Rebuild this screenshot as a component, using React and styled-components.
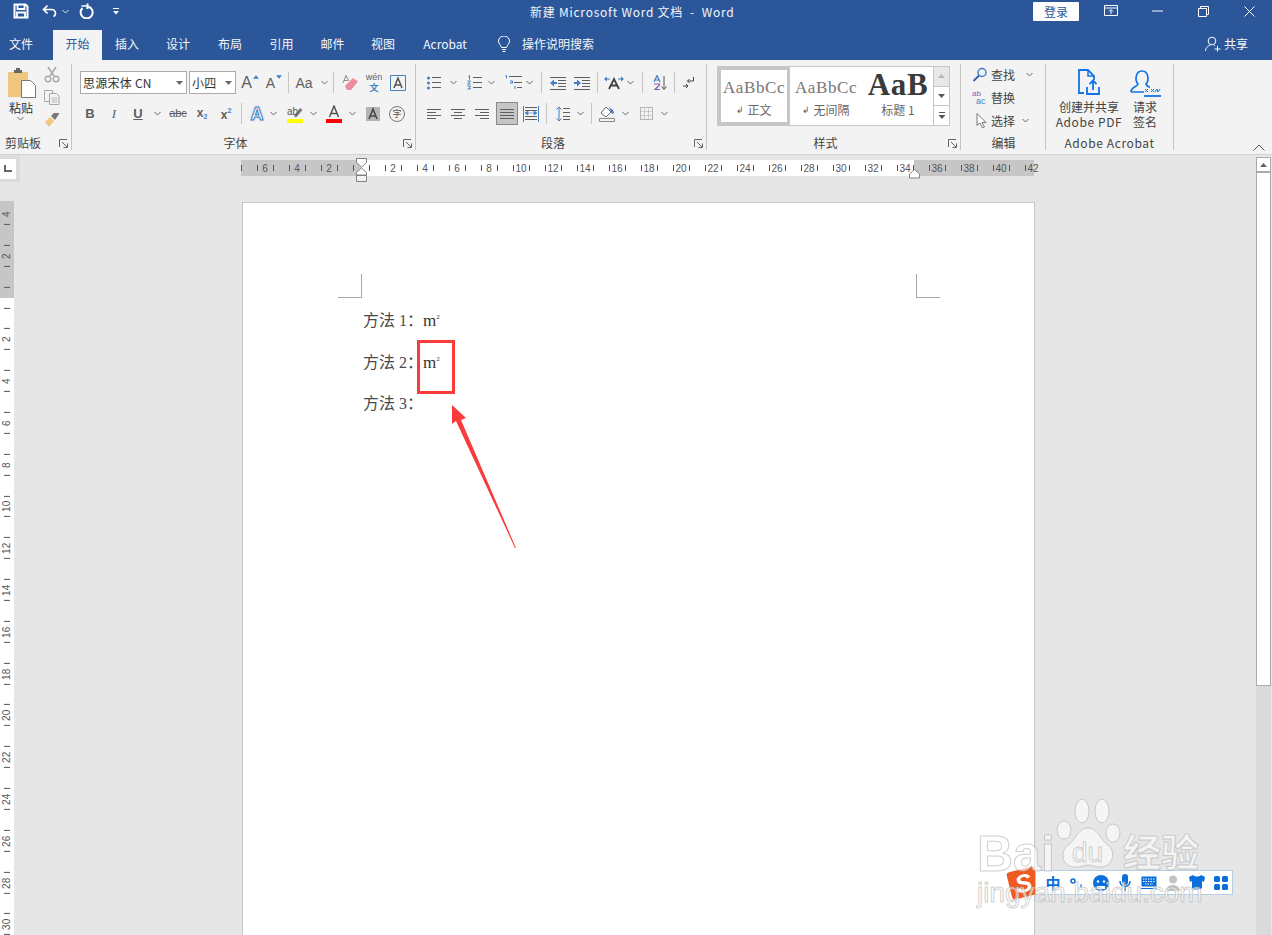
import styled, { createGlobalStyle } from "styled-components";

const FONT = `"Noto Sans CJK SC", "Noto Sans", sans-serif`;
const BLUE = "#2b579a";
const ICON_GREY = "#5f5f5f";
const ICON_BLUE = "#3f7fc4";

const GlobalStyle = createGlobalStyle`
  html, body { margin: 0; padding: 0; background: #e6e6e6; }
  * { box-sizing: border-box; }
`;

const Root = styled.div`
  position: relative;
  display: flex;
  flex-direction: column;
  width: 1272px;
  height: 935px;
  overflow: hidden;
  font-family: ${FONT};
  font-size: 12px;
  color: #333;
`;

/* title bar */
const TitleBar = styled.div`
  display: flex;
  align-items: center;
  flex: 0 0 30px;
  padding-bottom: 8px;
  background: ${BLUE};
  color: #fff;
`;
const QuickAccess = styled.div`
  display: flex;
  align-items: center;
  flex: 0 0 530px;
  padding-left: 13px;
`;
const QatButton = styled.span`
  display: flex;
  align-items: center;
  justify-content: center;
  width: ${(p) => p.$w}px;
  margin-left: ${(p) => p.$ml || 0}px;
`;
const DocTitle = styled.div`
  font-size: 12px;
  letter-spacing: 0.75px;
  white-space: pre;
  color: #f2f5fa;
`;
const WindowControls = styled.div`
  display: flex;
  align-items: center;
  margin-left: auto;
`;
const LoginButton = styled.span`
  display: flex;
  align-items: center;
  justify-content: center;
  width: 46px;
  height: 19px;
  margin-right: 9px;
  border-radius: 1px;
  background: #fff;
  color: ${BLUE};
`;
const WindowButton = styled.span`
  display: flex;
  align-items: center;
  justify-content: center;
  width: 46px;
  height: 22px;
`;

/* tabs */
const TabBar = styled.div`
  display: flex;
  align-items: stretch;
  flex: 0 0 30px;
  background: ${BLUE};
  color: #f4f6fa;
`;
const Tab = styled.span`
  display: flex;
  align-items: center;
  justify-content: center;
  width: ${(p) => p.$w}px;
  margin-left: ${(p) => p.$ml || 0}px;
  padding-bottom: 3px;
  ${(p) => p.$active && `background: #f3f3f3; color: ${BLUE};`}
`;
const SearchHint = styled.span`
  display: flex;
  align-items: center;
  gap: 11px;
  margin-left: 15px;
  padding-bottom: 3px;
`;
const ShareButton = styled.span`
  display: flex;
  align-items: center;
  gap: 3px;
  margin-left: auto;
  padding: 0 24px 3px 0;
`;

/* ribbon */
const Ribbon = styled.div`
  position: relative;
  display: flex;
  flex: 0 0 95px;
  padding: 4px 0;
  background: #f3f3f3;
  border-bottom: 1px solid #d2d2d2;
`;
const Group = styled.section`
  position: relative;
  display: flex;
  flex-direction: column;
  flex: 0 0 ${(p) => p.$w}px;
  height: 86px;
  border-right: 1px solid #c6c6c6;
`;
const GroupBody = styled.div`
  display: ${(p) => (p.$row ? "flex" : "block")};
  flex: 1;
  padding-top: ${(p) => p.$top || 0}px;
`;
const GroupLabel = styled.div`
  height: 17px;
  line-height: 20px;
  text-align: ${(p) => p.$align || "center"};
  padding-left: ${(p) => p.$pl || 0}px;
  padding-right: ${(p) => p.$pr || 0}px;
  color: #444;
  letter-spacing: ${(p) => p.$ls || 0}px;
`;
const Launcher = styled.svg`
  position: absolute;
  right: 3px;
  bottom: 2px;
  width: 9px;
  height: 9px;
`;
const ToolRow = styled.div`
  display: flex;
  align-items: center;
  height: ${(p) => p.$h || 23}px;
  padding-left: ${(p) => p.$pl || 0}px;
  margin-bottom: ${(p) => p.$mb || 0}px;
`;
const Tool = styled.span`
  display: flex;
  align-items: center;
  justify-content: center;
  flex: 0 0 ${(p) => p.$w || 24}px;
  height: ${(p) => p.$h || 22}px;
  margin-left: ${(p) => p.$ml || 0}px;
  color: ${(p) => p.$color || ICON_GREY};
  ${(p) => p.$active && `background: #c6c6c6; border: 1px solid #8a8a8a;`}
`;
const Separator = styled.span`
  display: flex;
  justify-content: center;
  flex: 0 0 ${(p) => p.$w || 5}px;
  height: 21px;
  &::before {
    content: "";
    width: 1px;
    background: #c6c6c6;
  }
`;
const LetterGlyph = styled.span`
  font-family: ${(p) => p.$family || `"Liberation Sans", sans-serif`};
  font-size: ${(p) => p.$size || 13}px;
  font-weight: ${(p) => p.$weight || 700};
  font-style: ${(p) => p.$italic ? "italic" : "normal"};
  text-decoration: ${(p) => p.$deco || "none"};
  color: ${(p) => p.$color || ICON_GREY};
  line-height: 1;
  white-space: nowrap;
`;
const ResizeCaret = styled.span`
  display: flex;
  align-self: flex-start;
  margin: 3px 0 0 1px;
`;
const PinyinStack = styled.span`
  display: flex;
  flex-direction: column;
  align-items: center;
  gap: 1px;
`;
const OutlineA = styled(LetterGlyph)`
  color: #fff;
  -webkit-text-stroke: 1px ${ICON_BLUE};
  text-shadow: 0 0 3px rgba(63, 127, 196, 0.5);
`;
const CircledChar = styled.span`
  display: flex;
  align-items: center;
  justify-content: center;
  width: 16px;
  height: 16px;
  border: 1px solid #777;
  border-radius: 50%;
  font-size: 9px;
  line-height: 1;
  color: #555;
`;
const Sub = styled.sub`
  font-size: 7px;
  color: ${ICON_BLUE};
  vertical-align: -2px;
`;
const Sup = styled.sup`
  font-size: 7px;
  color: ${ICON_BLUE};
  vertical-align: 6px;
`;
const Select = styled.span`
  display: flex;
  align-items: center;
  justify-content: space-between;
  flex: 0 0 ${(p) => p.$w}px;
  height: 23px;
  margin-right: 2px;
  padding: 0 3px 0 2px;
  background: #fff;
  border: 1px solid #ababab;
  color: #333;
  letter-spacing: 0.25px;
`;

/* clipboard */
const ClipboardLayout = styled.div`
  display: flex;
  padding: 4px 0 0 8px;
`;
const PasteButton = styled.div`
  display: flex;
  flex-direction: column;
  align-items: center;
  width: 29px;
  gap: 1px;
`;
const PasteLabel = styled.span`
  display: flex;
  flex-direction: column;
  align-items: center;
  margin-right: 3px;
`;
const ClipTools = styled.div`
  display: flex;
  flex-direction: column;
  gap: 7px;
  margin: -2px 0 0 7px;
`;

/* style gallery */
const Gallery = styled.div`
  display: flex;
  width: 233px;
  height: 60px;
  margin: 2px 0 0 10px;
  background: #fff;
  border: 1px solid #c6c6c6;
`;
const StyleItem = styled.div`
  display: flex;
  flex-direction: column;
  align-items: center;
  flex: 0 0 72px;
  overflow: hidden;
  padding-top: ${(p) => p.$selected ? 4 : 7}px;
  ${(p) => p.$selected && `border: 3px solid #c6c6c6;`}
`;
const StylePreview = styled.div`
  font-family: "Liberation Serif", "DejaVu Serif", serif;
  font-size: ${(p) => p.$big ? 31 : 17}px;
  font-weight: ${(p) => p.$big ? 700 : 400};
  line-height: 27px;
  height: 27px;
  margin-top: ${(p) => p.$big ? -3 : 0}px;
  margin-bottom: ${(p) => p.$big ? 3 : 0}px;
  letter-spacing: 0.6px;
  white-space: nowrap;
  color: ${(p) => p.$big ? "#3a3a3a" : "#777"};
`;
const StyleName = styled.div`
  display: flex;
  align-items: center;
  gap: 3px;
  line-height: 16px;
  margin-top: 1px;
  color: #666;
`;
const ParaMark = styled.span`
  font-size: 9px;
  color: #555;
`;
const GalleryScroll = styled.div`
  display: flex;
  flex-direction: column;
  flex: 0 0 16px;
  margin-left: -1px;
  border-left: 1px solid #c6c6c6;
`;
const GalleryArrow = styled.span`
  display: flex;
  align-items: center;
  justify-content: center;
  flex: 1;
  background: ${(p) => p.$disabled ? "#e8e8e8" : "#fff"};
  & + & { border-top: 1px solid #c6c6c6; }
`;

/* editing */
const EditList = styled.div`
  margin-top: -1.5px;
`;
const EditRow = styled.div`
  display: flex;
  align-items: center;
  height: 23px;
  padding-left: ${(p) => p.$pl || 11}px;
  gap: 3px;
  color: #444;
`;
const EditChevron = styled.span`
  display: flex;
  margin-left: ${(p) => p.$ml}px;
`;

/* acrobat */
const BigButton = styled.div`
  display: flex;
  flex-direction: column;
  align-items: center;
  flex: 0 0 ${(p) => p.$w}px;
  margin-left: ${(p) => p.$ml || 0}px;
  padding-top: 5px;
  line-height: 15px;
  text-align: center;
  color: #444;
`;
const BigIcon = styled.div`
  height: 28px;
  margin-bottom: 2px;
`;
const WideLatin = styled.span`
  letter-spacing: 0.6px;
  white-space: nowrap;
`;
const CollapseRibbon = styled.svg`
  position: absolute;
  right: 7px;
  bottom: 3px;
  width: 12px;
  height: 7px;
`;

/* workspace */
const Workspace = styled.div`
  position: relative;
  display: flex;
  flex: 1;
  min-height: 0;
  background: #e6e6e6;
`;
const TabStop = styled.div`
  position: absolute;
  left: 0;
  top: 0;
  display: flex;
  align-items: center;
  width: 20px;
  height: 27px;
  background: #dcdcdc;
`;
const TabStopInner = styled.div`
  display: flex;
  align-items: center;
  justify-content: center;
  width: 16px;
  height: 20px;
  background: #fff;
  &::before {
    content: "";
    width: 6px;
    height: 5px;
    border-left: 2px solid #666;
    border-bottom: 2px solid #666;
  }
`;
const VerticalRuler = styled.div`
  display: flex;
  flex-direction: column;
  flex: 0 0 14px;
  margin-top: 46px;
  padding-top: 3px;
  overflow: hidden;
  background: linear-gradient(to bottom, #c6c6c6 97px, #fff 97px);
`;
const VerticalCell = styled.span`
  display: flex;
  align-items: center;
  justify-content: center;
  flex: 0 0 20.9px;
  writing-mode: vertical-rl;
  transform: rotate(180deg);
  font-family: "Liberation Sans", sans-serif;
  font-size: 10px;
  line-height: 14px;
  color: #555;
  background: linear-gradient(#555, #555) center top / 6px 1px no-repeat;
`;
const Center = styled.div`
  display: flex;
  flex-direction: column;
  flex: 1;
  min-width: 0;
`;
const HorizontalRuler = styled.div`
  position: relative;
  display: flex;
  flex: 0 0 16px;
  width: 793px;
  margin: 5px 0 0 227px;
  background: linear-gradient(to right, #c6c6c6 120px, #fff 120px, #fff 673px, #c6c6c6 673px);
`;
const RulerCell = styled.span`
  display: flex;
  align-items: center;
  justify-content: center;
  flex: 0 0 16px;
  font-family: "Liberation Sans", sans-serif;
  font-size: 10px;
  color: #555;
  background: linear-gradient(#555, #555) left center / 1px 6px no-repeat;
`;
const IndentMarker = styled.svg`
  position: absolute;
  left: ${(p) => p.$left}px;
  top: ${(p) => p.$top}px;
`;
const Page = styled.div`
  flex: 1;
  width: 793px;
  margin: 26px 0 0 228px;
  background: #fff;
  border: 1px solid #c6c6c6;
  border-bottom: 0;
  padding-top: 71px;
  font-family: "Liberation Serif", "Noto Sans CJK SC", serif;
  font-size: 16px;
  color: #4a4a4a;
`;
const CropMarks = styled.div`
  display: flex;
  justify-content: space-between;
  padding: 0 94px 0 95px;
`;
const CropMark = styled.span`
  width: 24px;
  height: 24px;
  border-bottom: 1px solid #a8a8a8;
  ${(p) => p.$right ? "border-left: 1px solid #a8a8a8;" : "border-right: 1px solid #a8a8a8;"}
`;
const Body = styled.div`
  padding-top: 2px;
`;
const Paragraph = styled.p`
  margin: 0;
  height: 41.5px;
  line-height: 41.5px;
  padding-left: 120px;
  white-space: pre;
`;
const SquareMark = styled.span`
  color: #333;
  font-size: 17px;
`;
const TinyTwo = styled.sup`
  font-size: 7px;
  line-height: 0;
  vertical-align: 7px;
`;
const Scrollbar = styled.div`
  display: flex;
  flex-direction: column;
  flex: 0 0 16px;
  padding: 2px 1px 0 0;
`;
const ScrollUp = styled.div`
  display: flex;
  align-items: center;
  justify-content: center;
  height: 15px;
  background: #fff;
  border: 1px solid #ababab;
`;
const ScrollThumb = styled.div`
  height: 514px;
  background: #fff;
  border: 1px solid #ababab;
`;
const ScrollTrack = styled.div`
  flex: 1;
  background: #dadada;
`;

/* things on top of the page */
const Highlight = styled.div`
  position: absolute;
  left: 417px;
  top: 340px;
  width: 38px;
  height: 54px;
  border: 3px solid #f93b3b;
`;
const ArrowSvg = styled.svg`
  position: absolute;
  left: 450px;
  top: 403px;
`;
const Watermark = styled.div`
  position: absolute;
  left: 975px;
  top: 795px;
  width: 232px;
  height: 115px;
  pointer-events: none;
  color: rgba(255, 255, 255, 0.6);
  -webkit-text-stroke: 1px rgba(170, 170, 170, 0.55);
  font-family: "Liberation Sans", sans-serif;
  line-height: 1;
`;
const MarkText = styled.span`
  position: absolute;
  left: ${(p) => p.$x}px;
  top: ${(p) => p.$y}px;
  font-size: ${(p) => p.$size}px;
  font-weight: ${(p) => p.$weight || 400};
  font-family: ${(p) => p.$cjk ? FONT : `"Liberation Sans", sans-serif`};
  white-space: nowrap;
`;
const PawSvg = styled.svg`
  position: absolute;
  left: 80px;
  top: 0;
`;
const ImeBar = styled.div`
  position: absolute;
  left: 1035px;
  top: 870px;
  display: flex;
  align-items: center;
  width: 198px;
  height: 25px;
  padding-left: 5px;
  background: #fff;
  border: 1px solid #b6cdea;
`;
const ImeCell = styled.span`
  display: flex;
  align-items: center;
  justify-content: center;
  flex: 0 0 24px;
  color: #0a6fdb;
  font-weight: 700;
  font-size: 15px;
`;
const ImeLogo = styled.div`
  position: absolute;
  left: 1009px;
  top: 869px;
  display: flex;
  align-items: center;
  justify-content: center;
  width: 29px;
  height: 28px;
  background: #ef5a1f;
  border-radius: 3px;
  transform: rotate(-14deg);
  color: #fff;
  font-family: "Liberation Sans", sans-serif;
  font-size: 25px;
  font-weight: 700;
  font-style: italic;
`;

/* icons */
const Chevron = ({ color = "#666" }) => (
  <svg width="7" height="5" viewBox="0 0 7 5"><path d="M.5 1l3 3 3-3" fill="none" stroke={color} /></svg>
);
const Caret = ({ up, color = "#555", w = 7 }) => (
  <svg width={w} height="4" viewBox="0 0 7 4"><path d={up ? "M3.5 0L7 4H0z" : "M0 0h7L3.5 4z"} fill={color} /></svg>
);
const Ico = ({ w = 16, h = 16, children }) => (
  <svg width={w} height={h} viewBox={`0 0 ${w} ${h}`}>{children}</svg>
);
const LauncherIcon = () => (
  <Launcher viewBox="0 0 9 9">
    <path d="M.5 8V.5H8M3 3l5 5M4.5 8.5h4v-4" fill="none" stroke="#666" />
  </Launcher>
);

const Lines = ({ x = 0, rows, color = "#5f5f5f" }) =>
  rows.map(([y, a, b]) => <path key={y} d={`M${x + a} ${y + 0.5}H${x + b}`} stroke={color} fill="none" />);

const AlignIcon = ({ kind }) => {
  const sets = {
    left: [[2, 0, 14], [5, 0, 9], [8, 0, 14], [11, 0, 9]],
    center: [[2, 0, 14], [5, 3, 11], [8, 0, 14], [11, 3, 11]],
    right: [[2, 0, 14], [5, 5, 14], [8, 0, 14], [11, 5, 14]],
    justify: [[2, 0, 14], [5, 0, 14], [8, 0, 14], [11, 0, 14]],
  };
  return <Ico w={14} h={14}><Lines rows={sets[kind]} /></Ico>;
};

const rulerCells = Array.from({ length: 50 }, (_, i) => i - 7);
const verticalCells = Array.from({ length: 35 }, (_, i) => i - 4);

export default function App() {
  return (
    <Root>
      <GlobalStyle />
      <TitleBar>
        <QuickAccess>
          <QatButton $w={16}>
            <Ico w={16} h={16}>
              <path d="M1.5 1.5h11l2 2v11h-13z" fill="none" stroke="#fff" strokeWidth="2" />
              <path d="M4.500 2v4h7V2M4 14.500V9.500h8v5" fill="none" stroke="#fff" strokeWidth="1.800" />
            </Ico>
          </QatButton>
          <QatButton $w={16} $ml={13}>
            <Ico w={16} h={14}>
              <path d="M5.5 1.5L1.5 5.5l4 4M2 5.5h7.5a4 4 0 0 1 4 4 3.5 3.5 0 0 1-2 3" fill="none" stroke="#fff" strokeWidth="1.7" />
            </Ico>
          </QatButton>
          <QatButton $w={8} $ml={3}><Chevron color="#dfe6f2" /></QatButton>
          <QatButton $w={16} $ml={10}>
            <Ico w={16} h={16}>
              <path d="M3.500 5A6 6 0 1 0 9 3.500" fill="none" stroke="#fff" strokeWidth="2" />
              <path d="M8.500 .5v5.500" fill="none" stroke="#fff" strokeWidth="2" />
              <path d="M2.500 3h6" fill="none" stroke="#fff" strokeWidth="1.500" />
            </Ico>
          </QatButton>
          <QatButton $w={8} $ml={17}>
            <Ico w={8} h={8}>
              <path d="M1 1.5h6" stroke="#fff" />
              <path d="M1 4h6L4 7.5z" fill="#fff" />
            </Ico>
          </QatButton>
        </QuickAccess>
        <DocTitle>新建 Microsoft Word 文档  -  Word</DocTitle>
        <WindowControls>
          <LoginButton>登录</LoginButton>
          <WindowButton>
            <Ico w={14} h={12}>
              <path d="M.5.5h13v10H.5zM.5 3h13M7 9V5M5 6.5L7 4.500l2 2" fill="none" stroke="#fff" />
            </Ico>
          </WindowButton>
          <WindowButton>
            <Ico w={11} h={2}><path d="M0 1h11" stroke="#fff" /></Ico>
          </WindowButton>
          <WindowButton>
            <Ico w={11} h={11}>
              <path d="M.5 2.5h8v8h-8zM2.5 2.5v-2h8v8h-2" fill="none" stroke="#fff" />
            </Ico>
          </WindowButton>
          <WindowButton>
            <Ico w={11} h={11}><path d="M.5.5l10 10M10.5.5l-10 10" stroke="#fff" /></Ico>
          </WindowButton>
        </WindowControls>
      </TitleBar>

      <TabBar>
        <Tab $w={42}>文件</Tab>
        <Tab $w={49} $ml={11} $active>开始</Tab>
        <Tab $w={50}>插入</Tab>
        <Tab $w={52}>设计</Tab>
        <Tab $w={52}>布局</Tab>
        <Tab $w={51}>引用</Tab>
        <Tab $w={51}>邮件</Tab>
        <Tab $w={50}>视图</Tab>
        <Tab $w={74}>Acrobat</Tab>
        <SearchHint>
          <Ico w={14} h={16}>
            <path d="M4.5 11.5C4 9 1.5 8 1.5 5a5.5 5 0 0 1 11 0c0 3-2.500 4-3 6.500zM5 13.500h4M5.500 15.500h3" fill="none" stroke="#fff" />
          </Ico>
          操作说明搜索
        </SearchHint>
        <ShareButton>
          <Ico w={16} h={16}>
            <circle cx="7" cy="5" r="3.800" fill="none" stroke="#fff" />
            <path d="M.5 15c.5-4 3-5.500 5-6M9 9.500l1 .5M12.500 10v5.500M9.500 13h6" fill="none" stroke="#fff" />
          </Ico>
          共享
        </ShareButton>
      </TabBar>

      <Ribbon>
        <Group $w={72}>
          <GroupBody>
            <ClipboardLayout>
              <PasteButton>
                <Ico w={29} h={30}>
                  <path d="M0 4h20v25H0z" fill="#efc77f" />
                  <path d="M6 2h8v3H6z" fill="#666" />
                  <path d="M8 0h4v3H8z" fill="#666" />
                  <path d="M13.500 12.500h9l5 5v12h-14z" fill="#fff" stroke="#777" />
                </Ico>
                <PasteLabel>
                  粘贴
                  <Chevron />
                </PasteLabel>
              </PasteButton>
              <ClipTools>
                <Ico w={16} h={17}>
                  <path d="M4 1l6 9M12 1L6 10" stroke="#a8a8a8" strokeWidth="1.500" fill="none" />
                  <circle cx="4" cy="13" r="2.800" fill="none" stroke="#a8a8a8" strokeWidth="1.400" />
                  <circle cx="12" cy="13" r="2.800" fill="none" stroke="#a8a8a8" strokeWidth="1.400" />
                </Ico>
                <Ico w={16} h={15}>
                  <path d="M.5.5h8v11h-8z" fill="#f3f3f3" stroke="#a8a8a8" />
                  <path d="M5.500 3.500h7l2.500 2.500v8.500h-9.500z" fill="#f3f3f3" stroke="#a8a8a8" />
                  <path d="M7.500 8h6M7.500 10h6M7.500 12h6" stroke="#bbb" />
                </Ico>
                <Ico w={16} h={15}>
                  <path d="M1 10l5-5 4 4-5 6z" fill="#efc77f" />
                  <path d="M7 4l3-3 5 0 0 1-4 6z" fill="#777" />
                </Ico>
              </ClipTools>
            </ClipboardLayout>
          </GroupBody>
          <GroupLabel $align="left" $pl={5}>剪贴板</GroupLabel>
          <LauncherIcon />
        </Group>

        <Group $w={344}>
          <GroupBody $top={7}>
            <ToolRow $pl={8} $mb={8}>
              <Select $w={107}>思源宋体 CN<Caret color="#666" /></Select>
              <Select $w={47}>小四<Caret color="#666" /></Select>
              <Tool>
                <LetterGlyph $size={16} $weight={400}>A</LetterGlyph>
                <ResizeCaret><Caret up color={ICON_BLUE} w={6} /></ResizeCaret>
              </Tool>
              <Tool>
                <LetterGlyph $size={14} $weight={400}>A</LetterGlyph>
                <ResizeCaret><Caret color={ICON_BLUE} w={6} /></ResizeCaret>
              </Tool>
              <Separator />
              <Tool $w={26}><LetterGlyph $size={14} $weight={400}>Aa</LetterGlyph></Tool>
              <Tool $w={14}><Chevron /></Tool>
              <Separator />
              <Tool $w={28}>
                <Ico w={17} h={17}>
                  <path d="M3 12l8-8 5 3.500-7 8.500H5z" fill="#ec8c9c" />
                  <path d="M1 9l3-7.500L7 7M2 6.500h3.500" stroke="#888" fill="none" />
                </Ico>
              </Tool>
              <Tool $w={20}>
                <PinyinStack>
                  <LetterGlyph $size={9} $weight={400}>wén</LetterGlyph>
                  <LetterGlyph $family={FONT} $size={9} $color={ICON_BLUE}>文</LetterGlyph>
                </PinyinStack>
              </Tool>
              <Tool $ml={4} $w={20}>
                <Ico w={16} h={16}>
                  <path d="M.5.5h15v15H.5z" fill="none" stroke="#4a7ebb" />
                  <path d="M4 13l4-10 4 10M5.500 10h5" fill="none" stroke="#555" strokeWidth="1.500" />
                </Ico>
              </Tool>
            </ToolRow>
            <ToolRow $pl={6}>
              <Tool><LetterGlyph>B</LetterGlyph></Tool>
              <Tool><LetterGlyph $italic $weight={400} $family={`"Liberation Serif", serif`}>I</LetterGlyph></Tool>
              <Tool><LetterGlyph $deco="underline">U</LetterGlyph></Tool>
              <Tool $w={14}><Chevron /></Tool>
              <Tool $w={28}><LetterGlyph $size={11} $weight={400} $deco="line-through">abc</LetterGlyph></Tool>
              <Tool $w={20}><LetterGlyph $size={12}>x<Sub>2</Sub></LetterGlyph></Tool>
              <Tool $w={28}><LetterGlyph $size={12}>x<Sup>2</Sup></LetterGlyph></Tool>
              <Separator $w={3} />
              <Tool $ml={2}><OutlineA $size={18}>A</OutlineA></Tool>
              <Tool $w={8}><Chevron /></Tool>
              <Tool $ml={6}>
                <Ico w={16} h={18}>
                  <path d="M7 11l6-8 2.500 2-6.500 7.500z" fill="#777" />
                  <text x="0" y="10" fontFamily="Liberation Sans" fontSize="10" fill="#555">ab</text>
                  <path d="M0 14h16v4H0z" fill="#ffff00" />
                </Ico>
              </Tool>
              <Tool $w={12}><Chevron /></Tool>
              <Tool $ml={3}>
                <Ico w={16} h={18}>
                  <path d="M3.500 12l4.500-11 4.500 11M5 8.500h6" fill="none" stroke="#555" strokeWidth="1.500" />
                  <path d="M0 14h16v4H0z" fill="#f00" />
                </Ico>
              </Tool>
              <Tool $w={12}><Chevron /></Tool>
              <Tool $ml={3}>
                <Ico w={14} h={14}>
                  <path d="M0 0h14v14H0z" fill="#b4b4b4" />
                  <path d="M3 12l4-10 4 10M4.500 9h5" fill="none" stroke="#444" strokeWidth="1.500" />
                </Ico>
              </Tool>
              <Tool><CircledChar>字</CircledChar></Tool>
            </ToolRow>
          </GroupBody>
          <GroupLabel $pr={16}>字体</GroupLabel>
          <LauncherIcon />
        </Group>

        <Group $w={291}>
          <GroupBody $top={7}>
            <ToolRow $pl={6} $mb={8}>
              <Tool>
                <Ico w={14} h={14}>
                  <circle cx="1.500" cy="2" r="1.500" fill={ICON_BLUE} />
                  <circle cx="1.500" cy="7" r="1.500" fill={ICON_BLUE} />
                  <circle cx="1.500" cy="12" r="1.500" fill={ICON_BLUE} />
                  <Lines rows={[[1, 5, 14], [6, 5, 14], [11, 5, 14]]} />
                </Ico>
              </Tool>
              <Tool $w={14}><Chevron /></Tool>
              <Tool $ml={2}>
                <Ico w={15} h={15}>
                  <path d="M1.500 1l1-.5v4M.5 6h3v.5l-3 2.500h3M.5 11h3l-1 1.500 1 1.500h-3" fill="none" stroke={ICON_BLUE} />
                  <Lines rows={[[2, 6, 15], [7, 6, 15], [12, 6, 15]]} />
                </Ico>
              </Tool>
              <Tool $w={10}><Chevron /></Tool>
              <Tool $ml={5}>
                <Ico w={18} h={15}>
                  <path d="M1.500 1l1-.5v3M6 6h2.500v2H6M11 11v3" fill="none" stroke={ICON_BLUE} />
                  <Lines rows={[[1, 5, 18], [7, 10, 18], [12, 13, 18]]} />
                </Ico>
              </Tool>
              <Tool $w={8}><Chevron /></Tool>
              <Separator $w={17} />
              <Tool $w={16}>
                <Ico w={16} h={14}>
                  <Lines rows={[[1, 0, 16], [4, 8, 16], [7, 8, 16], [10, 8, 16], [13, 0, 16]]} />
                  <path d="M0 7l4-3.500v2.500h3v2H4v2.500z" fill={ICON_BLUE} />
                </Ico>
              </Tool>
              <Tool $w={16} $ml={8}>
                <Ico w={16} h={14}>
                  <Lines rows={[[1, 0, 16], [4, 8, 16], [7, 8, 16], [10, 8, 16], [13, 0, 16]]} />
                  <path d="M7 7L3 3.500v2.500H0v2h3v2.500z" fill={ICON_BLUE} />
                </Ico>
              </Tool>
              <Separator $w={14} />
              <Tool $w={20}>
                <Ico w={20} h={14}>
                  <path d="M5 13l5-10 5 10M7 9.500h6" fill="none" stroke="#444" strokeWidth="1.800" />
                  <path d="M0 3l3-2.500v5zM20 3l-3-2.500v5z" fill={ICON_BLUE} />
                  <path d="M3 3h3M14 3h3" stroke={ICON_BLUE} />
                </Ico>
              </Tool>
              <Tool $w={12}><Chevron /></Tool>
              <Separator $w={12} />
              <Tool>
                <Ico w={16} h={16}>
                  <path d="M2 7l3-6.500L8 7M3 5h4" fill="none" stroke={ICON_BLUE} strokeWidth="1.200" />
                  <path d="M2 9h5.500v1L3 14.500h5" fill="none" stroke="#8a5ab8" strokeWidth="1.200" />
                  <path d="M12 1v13M9.500 11.500L12 14.500l2.500-3" fill="none" stroke="#555" />
                </Ico>
              </Tool>
              <Separator $w={4} />
              <Tool $ml={1}>
                <Ico w={12} h={14}>
                  <path d="M10.500 1v4h-6M6.500 3l-2 2 2 2" fill="none" stroke="#444" />
                  <path d="M0 10h5M3 8l2 2-2 2" fill="none" stroke="#444" />
                </Ico>
              </Tool>
            </ToolRow>
            <ToolRow $pl={6}>
              <Tool><AlignIcon kind="left" /></Tool>
              <Tool><AlignIcon kind="center" /></Tool>
              <Tool><AlignIcon kind="right" /></Tool>
              <Tool $w={22} $h={23} $ml={2} $active><AlignIcon kind="justify" /></Tool>
              <Tool $ml={1}>
                <Ico w={16} h={16}>
                  <path d="M.5 0v16M15.500 0v16" stroke={ICON_BLUE} fill="none" />
                  <Lines x={2} rows={[[1, 0, 12], [4, 0, 12], [10, 0, 12], [13, 0, 12]]} />
                  <path d="M2 7l3-2v4zM14 7l-3-2v4zM5 7h6" fill={ICON_BLUE} stroke={ICON_BLUE} strokeWidth=".6" />
                </Ico>
              </Tool>
              <Separator $w={6} />
              <Tool $ml={2}>
                <Ico w={14} h={16}>
                  <path d="M3 1v14M.5 3.500L3 1l2.500 2.500M.5 12.500L3 15l2.500-2.500" fill="none" stroke={ICON_BLUE} />
                  <Lines rows={[[2, 7, 14], [6, 7, 14], [10, 7, 14], [13, 7, 14]]} />
                </Ico>
              </Tool>
              <Tool $w={10}><Chevron /></Tool>
              <Separator $w={12} />
              <Tool $w={20}>
                <Ico w={16} h={17}>
                  <path d="M2 8l5-6 5 5-5 5z" fill="#fff" stroke="#666" />
                  <path d="M10 2l4 3 1 3-2 1z" fill={ICON_BLUE} />
                  <path d="M.5 13.500h15v3H.5z" fill="#f3f3f3" stroke="#888" />
                </Ico>
              </Tool>
              <Tool $w={16}><Chevron /></Tool>
              <Tool $w={22} $ml={2}>
                <Ico w={13} h={13}>
                  <path d="M.5.5h12v12H.5z" fill="none" stroke="#777" strokeDasharray="1 1" />
                  <path d="M4.500.5v12M8.500.5v12M.5 4.500h12M.5 8.500h12" fill="none" stroke="#aaa" strokeDasharray="1 1" />
                </Ico>
              </Tool>
              <Tool $w={14}><Chevron /></Tool>
            </ToolRow>
          </GroupBody>
          <GroupLabel $pr={16}>段落</GroupLabel>
          <LauncherIcon />
        </Group>

        <Group $w={254}>
          <GroupBody>
            <Gallery>
              <StyleItem $selected>
                <StylePreview>AaBbCc</StylePreview>
                <StyleName><ParaMark>↲</ParaMark>正文</StyleName>
              </StyleItem>
              <StyleItem>
                <StylePreview>AaBbCc</StylePreview>
                <StyleName><ParaMark>↲</ParaMark>无间隔</StyleName>
              </StyleItem>
              <StyleItem>
                <StylePreview $big>AaB</StylePreview>
                <StyleName>标题 1</StyleName>
              </StyleItem>
              <GalleryScroll>
                <GalleryArrow $disabled><Caret up color="#b5b5b5" /></GalleryArrow>
                <GalleryArrow><Caret /></GalleryArrow>
                <GalleryArrow>
                  <Ico w={8} h={7}>
                    <path d="M1 .5h6" stroke="#555" />
                    <path d="M.5 3h7L4 7z" fill="#555" />
                  </Ico>
                </GalleryArrow>
              </GalleryScroll>
            </Gallery>
          </GroupBody>
          <GroupLabel $pr={16}>样式</GroupLabel>
          <LauncherIcon />
        </Group>

        <Group $w={85}>
          <GroupBody>
            <EditList>
              <EditRow>
                <Ico w={16} h={15}>
                  <circle cx="10" cy="5.500" r="4" fill="none" stroke={ICON_BLUE} strokeWidth="1.500" />
                  <path d="M7 8.500L1.500 14" stroke="#3568a8" strokeWidth="2" />
                </Ico>
                查找
                <EditChevron $ml={8}><Chevron /></EditChevron>
              </EditRow>
              <EditRow>
                <Ico w={16} h={16}>
                  <text x="0" y="6.500" fontFamily="Liberation Sans" fontSize="8" fill="#8a5ab8">ab</text>
                  <text x="4" y="15" fontFamily="Liberation Sans" fontSize="9" fill={ICON_BLUE}>ac</text>
                </Ico>
                替换
              </EditRow>
              <EditRow $pl={15}>
                <Ico w={12} h={15}>
                  <path d="M1 .5v12l3-2.500 2.500 5 2-1-2.500-4.500h4z" fill="#fff" stroke="#777" />
                </Ico>
                选择
                <EditChevron $ml={4}><Chevron /></EditChevron>
              </EditRow>
            </EditList>
          </GroupBody>
          <GroupLabel $pl={1}>编辑</GroupLabel>
        </Group>

        <Group $w={128}>
          <GroupBody $row>
            <BigButton $w={86}>
              <BigIcon>
                <Ico w={24} h={26}>
                  <path d="M7 24H2V1h9l6 6v4" fill="none" stroke="#1473e6" strokeWidth="1.800" />
                  <path d="M11 1v6h6" fill="none" stroke="#1473e6" strokeWidth="1.500" />
                  <path d="M10 18v7h12v-7" fill="none" stroke="#1473e6" strokeWidth="1.800" />
                  <path d="M16 21v-9M12.500 15l3.500-3.500 3.500 3.500" fill="none" stroke="#1473e6" strokeWidth="1.800" />
                </Ico>
              </BigIcon>
              创建并共享
              <WideLatin>Adobe PDF</WideLatin>
            </BigButton>
            <BigButton $w={30} $ml={-3}>
              <BigIcon>
                <Ico w={32} h={28}>
                  <path d="M2 23c0-5 6-5 7-8-3-3-3-13 4-13s7 10 4 13c1 2 3 3 4 3M2 23h13" fill="none" stroke="#1473e6" strokeWidth="1.700" />
                  <path d="M16 20l3 3m0-3l-3 3M22 20l3 3m0-3l-3 3M26 23l2-3 1 3 2-3" fill="none" stroke="#1473e6" />
                  <path d="M15 27h17" stroke="#1473e6" strokeWidth="1.800" />
                </Ico>
              </BigIcon>
              请求
              <br />
              签名
            </BigButton>
          </GroupBody>
          <GroupLabel $ls={0.6}>Adobe Acrobat</GroupLabel>
        </Group>
        <CollapseRibbon viewBox="0 0 12 7">
          <path d="M.5 6.500L6 1l5.500 5.500" fill="none" stroke="#555" />
        </CollapseRibbon>
      </Ribbon>

      <Workspace>
        <VerticalRuler>
          {verticalCells.map((k) => (
            <VerticalCell key={k}>{k !== 0 && k % 2 === 0 ? Math.abs(k) : ""}</VerticalCell>
          ))}
        </VerticalRuler>
        <TabStop><TabStopInner /></TabStop>
        <Center>
          <HorizontalRuler>
            {rulerCells.map((k) => (
              <RulerCell key={k}>{k !== 0 && k % 2 === 0 ? Math.abs(k) : ""}</RulerCell>
            ))}
            <IndentMarker $left={115} $top={-2} width="11" height="26" viewBox="0 0 11 26">
              <path d="M.5.5h10v4L5.500 9 .5 4.500z" fill="#fff" stroke="#808080" />
              <path d="M5.500 10l5 4.500V17H.5v-2.500z" fill="#fff" stroke="#808080" />
              <path d="M.5 17.500h10v6H.5z" fill="#f3f3f3" stroke="#808080" />
            </IndentMarker>
            <IndentMarker $left={668} $top={9} width="11" height="10" viewBox="0 0 11 10">
              <path d="M5.500.5l5 4.500v4H.5V5z" fill="#fff" stroke="#808080" />
            </IndentMarker>
          </HorizontalRuler>
          <Page>
            <CropMarks>
              <CropMark />
              <CropMark $right />
            </CropMarks>
            <Body>
              <Paragraph>方法 1：<SquareMark>m<TinyTwo>2</TinyTwo></SquareMark></Paragraph>
              <Paragraph>方法 2：<SquareMark>m<TinyTwo>2</TinyTwo></SquareMark></Paragraph>
              <Paragraph>方法 3：</Paragraph>
            </Body>
          </Page>
        </Center>
        <Scrollbar>
          <ScrollUp><Caret up color="#606060" w={9} /></ScrollUp>
          <ScrollThumb />
          <ScrollTrack />
        </Scrollbar>
      </Workspace>

      <Highlight />
      <ArrowSvg width="70" height="148" viewBox="450 403 70 148">
        <path d="M452 405l14 13-5 2 55 128-1 0-59-127-4 3z" fill="#f93b3b" />
      </ArrowSvg>

      <ImeLogo>S</ImeLogo>
      <ImeBar>
        <ImeCell>中</ImeCell>
        <ImeCell>
          <Ico w={14} h={12}>
            <circle cx="3" cy="4" r="2" fill="none" stroke="#0a6fdb" strokeWidth="1.500" />
            <path d="M11 7v4" stroke="#7db3ea" strokeWidth="2" />
          </Ico>
        </ImeCell>
        <ImeCell>
          <Ico w={16} h={16}>
            <circle cx="8" cy="8" r="8" fill="#0a6fdb" />
            <circle cx="5" cy="6.500" r="1.200" fill="#fff" />
            <circle cx="11" cy="6.500" r="1.200" fill="#fff" />
            <path d="M4 11h8v3H4z" fill="#fff" />
          </Ico>
        </ImeCell>
        <ImeCell>
          <Ico w={12} h={18}>
            <rect x="3" y="0" width="6" height="11" rx="3" fill="#0a6fdb" />
            <path d="M1 7c0 7 10 7 10 0M6 13v4" fill="none" stroke="#0a6fdb" strokeWidth="1.500" />
          </Ico>
        </ImeCell>
        <ImeCell>
          <Ico w={16} h={13}>
            <path d="M.5.5h15v10H.5z" fill="#0a6fdb" />
            <path d="M2 3h12M2 5.500h12M4 8h8" stroke="#fff" strokeDasharray="1.500 1" />
            <path d="M0 12.500h16" stroke="#0a6fdb" />
          </Ico>
        </ImeCell>
        <ImeCell>
          <Ico w={14} h={16}>
            <circle cx="7" cy="4.500" r="4" fill="#c4c4c4" />
            <path d="M0 16c0-8 14-8 14 0z" fill="#c4c4c4" />
          </Ico>
        </ImeCell>
        <ImeCell>
          <Ico w={16} h={15}>
            <path d="M0 2l4-2c2 2 6 2 8 0l4 2-1 5-2-1v7c-3 2-7 2-10 0V6L1 7z" fill="#0a6fdb" />
          </Ico>
        </ImeCell>
        <ImeCell>
          <Ico w={14} h={14}>
            <rect width="6" height="6" rx="1.500" fill="#0a6fdb" />
            <rect x="8" width="6" height="6" rx="1.500" fill="#0a6fdb" />
            <rect y="8" width="6" height="6" rx="1.500" fill="#0a6fdb" />
            <rect x="8" y="8" width="6" height="6" rx="1.500" fill="#0a6fdb" />
          </Ico>
        </ImeCell>
      </ImeBar>

      <Watermark>
        <PawSvg width="66" height="80" viewBox="0 0 66 80" fill="rgba(255,255,255,.6)" stroke="rgba(170,170,170,.55)">
          <ellipse cx="27" cy="16" rx="7" ry="12" />
          <ellipse cx="47" cy="16" rx="7" ry="12" />
          <ellipse cx="9" cy="35" rx="7" ry="9" />
          <ellipse cx="58" cy="38" rx="7" ry="9" />
          <path d="M33 33c10 0 12 12 20 17 8 6 6 22-8 22-6 0-8-2-12-2s-8 3-14 2C6 71 5 56 13 50c8-5 10-17 20-17z" />
        </PawSvg>
        <MarkText $x={2} $y={34} $size={50} $weight={700}>Bai</MarkText>
        <MarkText $x={97} $y={44} $size={28}>du</MarkText>
        <MarkText $x={148} $y={36} $size={38} $cjk $weight={700}>经验</MarkText>
        <MarkText $x={2} $y={84} $size={28}>jingyan.baidu.com</MarkText>
      </Watermark>
    </Root>
  );
}
